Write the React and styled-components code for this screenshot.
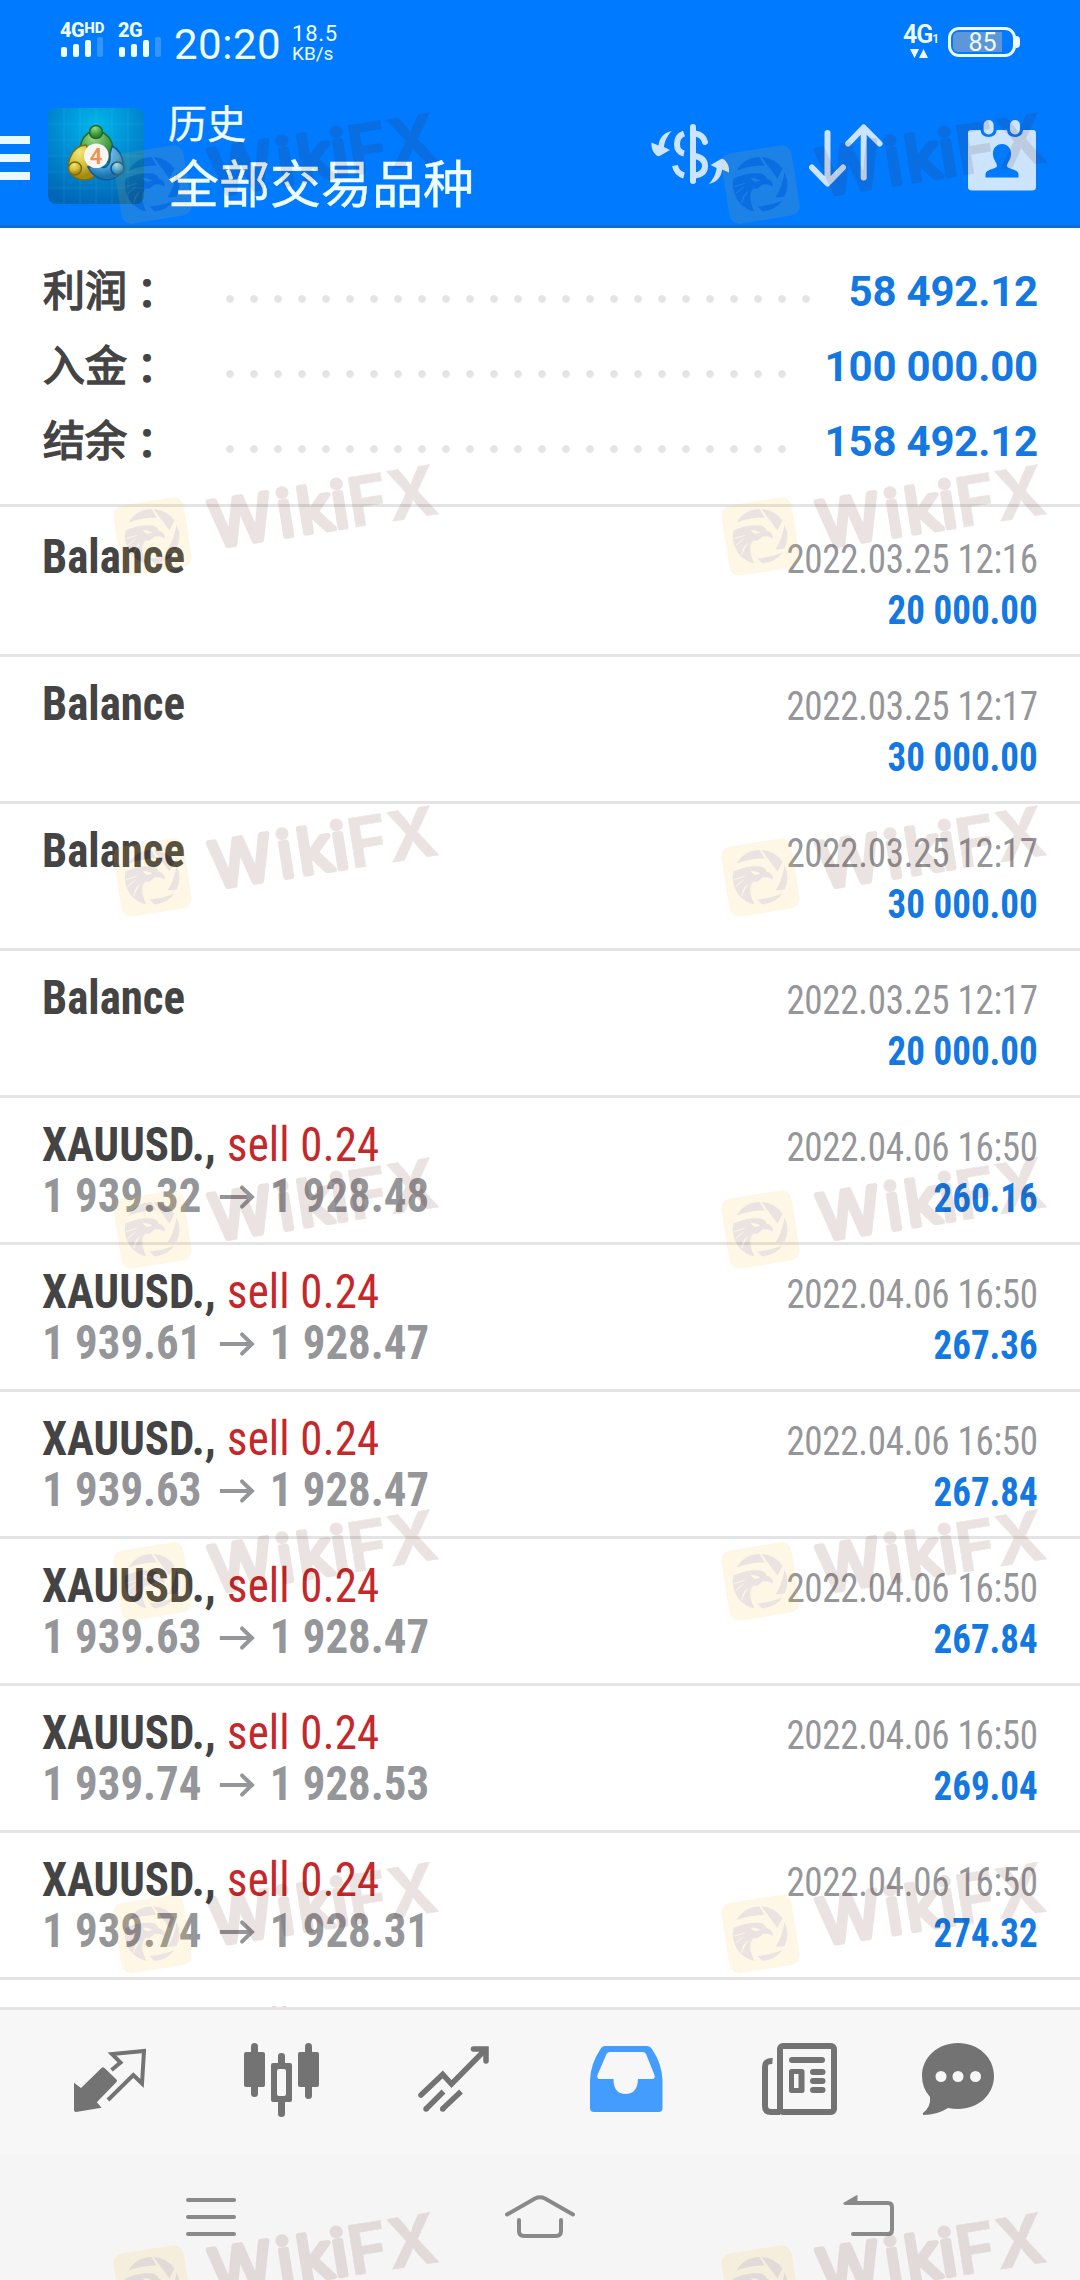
import React from 'react';
import styled, { createGlobalStyle, css } from 'styled-components';

const GlobalStyle = createGlobalStyle`
  * {
    box-sizing: border-box;
  }

  body {
    margin: 0;
    background: #fff;
  }
`;

// Layout
const Screen = styled.div`
  position: relative;
  display: flex;
  flex-direction: column;
  width: 1080px;
  height: 2280px;
  overflow: hidden;
  background: #fff;
  font-family: 'Roboto', 'Noto Sans CJK SC', sans-serif;
`;

// Status bar
const StatusBar = styled.div`
  display: flex;
  align-items: flex-start;
  height: 90px;
  padding: 0 60px;
  background: #007aff;
  color: #effdff;
`;

const Sim = styled.div`
  display: flex;
  flex-direction: column;
  width: ${props => props.$width}px;
  padding-top: 18px;
`;

const SimLabel = styled.div`
  height: 19px;
  font-size: 20px;
  line-height: 24px;
  font-weight: 800;
  letter-spacing: -0.5px;
  white-space: nowrap;

  sup {
    font-size: 15px;
    line-height: 1;
    vertical-align: 4px;
    letter-spacing: 0;
  }
`;

const Bars = styled.div`
  display: flex;
  align-items: flex-end;
  gap: 6px;
  height: 20px;
  padding-left: 1px;
`;

const Bar = styled.i`
  width: 6px;
  height: ${props => props.$height}px;
  border-radius: 2px;
  background: ${props => (props.$dim ? '#3395ff' : 'currentColor')};
`;

const Clock = styled.div`
  padding-top: 20px;
  font-size: 42px;
  line-height: 50px;
  letter-spacing: 0.5px;
`;

const Speed = styled.div`
  padding: 22px 0 0 11px;
  font-size: 22px;
  line-height: 23px;
  letter-spacing: 0.7px;

  small {
    display: block;
    font-size: 19px;
    line-height: 18px;
    letter-spacing: -0.1px;
  }
`;

const Network = styled.div`
  display: flex;
  flex-direction: column;
  margin-left: auto;
  width: 45px;
  padding-top: 24px;
  font-size: 25px;
  line-height: 22px;
  font-weight: 600;
  letter-spacing: -1px;

  sub {
    font-size: 12px;
    line-height: 1;
    vertical-align: 0;
  }

  svg {
    margin: 3px 0 0 7px;
  }
`;

const Battery = styled.div`
  display: flex;
  align-items: center;
  margin-top: 27px;

  &::after {
    content: '';
    width: 4px;
    height: 12px;
    border-radius: 0 4px 4px 0;
    background: #effdff;
  }
`;

const BatteryBody = styled.div`
  width: 68px;
  height: 30px;
  padding: 2px;
  border: 3px solid #effdff;
  border-radius: 11px;
  font-size: 25px;
  line-height: 21px;
  text-align: center;
`;

const BatteryLevel = styled.div`
  width: 49px;
  height: 20px;
  padding-left: 10px;
  border-radius: 5px 0 0 5px;
  background: #5c97d9;
`;

// App bar
const AppBar = styled.header`
  display: flex;
  align-items: flex-start;
  height: 138px;
  padding-right: 44px;
  border-bottom: 3px solid #0b6dcf;
  background: #007aff;
`;

const Burger = styled.div`
  display: flex;
  flex-direction: column;
  gap: 10px;
  width: 30px;
  margin: 46px 18px 0 0;

  i {
    height: 8px;
    background: #e9faff;
  }
`;

const AppLogo = styled.svg`
  width: 96px;
  height: 96px;
  margin-top: 18px;
`;

const Titles = styled.div`
  margin: 3px 0 0 24px;
  color: #effdff;
  font-family: 'Noto Sans CJK SC', sans-serif;
  -webkit-text-stroke: 0.4px #effdff;
`;

const Title = styled.div`
  font-size: 39px;
  line-height: 56px;
`;

const Subtitle = styled.div`
  font-size: 51px;
  line-height: 65px;
`;

const Actions = styled.div`
  display: flex;
  gap: 80px;
  margin: 30px 0 0 auto;
  color: #cce4ff;
`;

// Summary
const Summary = styled.section`
  height: 279px;
  padding: 24px 42px 0 43px;
  border-bottom: 3px solid #e4e4e4;
`;

const SummaryRow = styled.div`
  display: flex;
  align-items: center;
  height: 75px;
`;

const SummaryLabel = styled.div`
  width: 175px;
  color: #444;
  font: 400 42px/71px 'Noto Sans CJK SC', sans-serif;
  -webkit-text-stroke: 1.5px #444;
  padding-bottom: 4px;

  span {
    margin-left: -1px;
    font-family: 'Noto Sans CJK JP', sans-serif;
    line-height: 1;
    vertical-align: -3px;
  }
`;

const Leader = styled.div`
  flex: 1;
  height: 8px;
  margin: 18px 32px 0 8px;
  background: radial-gradient(circle at 4px 4px, #e4e4e4 3.4px, transparent 4.3px) 0 0 / 24px 8px repeat-x;
`;

const SummaryValue = styled.div`
  padding-top: 3px;
  color: #1478e2;
  font-size: 42px;
  font-weight: 700;
  letter-spacing: -0.2px;
`;

// Deals
const condensed = css`
  font-family: 'Roboto Condensed', 'Roboto', sans-serif;
  font-stretch: 75%;
  white-space: nowrap;
`;

const List = styled.main`
  height: 1500px;
  padding-top: 3px;
  overflow: hidden;
`;

const Row = styled.div`
  ${condensed}
  display: flex;
  justify-content: space-between;
  height: 147px;
  padding: 21px 42px 0 42px;
  border-bottom: 3px solid #e4e4e4;
  line-height: 51px;
`;

// both columns are squeezed a little past the narrowest face
const Deal = styled.div`
  font-size: 48px;
  font-weight: 700;
  color: #444;
  transform: scaleX(0.935);
  transform-origin: left;
`;

const Side = styled.span`
  margin-left: 1px;
  font-weight: 400;
  letter-spacing: 0.2px;
  color: #c5282a;
`;

const Prices = styled.div`
  display: flex;
  align-items: center;
  color: #95969a;

  svg {
    margin: 3px 16px 0 19px;
  }
`;

const Result = styled.div`
  padding-top: 3px;
  text-align: right;
  font-size: 40px;
  letter-spacing: -0.3px;
  color: #95969a;
  transform: scaleX(0.925);
  transform-origin: right;
`;

const Profit = styled.div`
  font-weight: 700;
  letter-spacing: 0;
  color: #1478e2;
`;

// Bottom bars
const TabBar = styled.nav`
  display: flex;
  align-items: flex-start;
  gap: 99px;
  height: 148px;
  padding: 33px 0 0 74px;
  border-top: 3px solid #e4e4e4;
  background: #f7f7f7;
  color: #737373;
`;

const Tab = styled.svg`
  flex: none;
  width: ${props => props.$width}px;
  height: 75px;
  margin-left: ${props => props.$shift || 0}px;
  color: ${props => (props.$active ? '#449cff' : 'inherit')};
`;

const SystemNav = styled.nav`
  display: flex;
  align-items: flex-start;
  justify-content: space-between;
  height: 125px;
  padding: 40px 186px 0;
  background: #f5f5f5;
  color: #898989;
`;

const WatermarkLayer = styled.svg`
  position: absolute;
  inset: 0;
  pointer-events: none;
`;

const summary = [
  { label: '利润', value: '58 492.12' },
  { label: '入金', value: '100 000.00' },
  { label: '结余', value: '158 492.12' },
];

const deals = [
  { name: 'Balance', time: '2022.03.25 12:16', profit: '20 000.00' },
  { name: 'Balance', time: '2022.03.25 12:17', profit: '30 000.00' },
  { name: 'Balance', time: '2022.03.25 12:17', profit: '30 000.00' },
  { name: 'Balance', time: '2022.03.25 12:17', profit: '20 000.00' },
  { name: 'XAUUSD.,', side: 'sell 0.24', open: '1 939.32', close: '1 928.48', time: '2022.04.06 16:50', profit: '260.16' },
  { name: 'XAUUSD.,', side: 'sell 0.24', open: '1 939.61', close: '1 928.47', time: '2022.04.06 16:50', profit: '267.36' },
  { name: 'XAUUSD.,', side: 'sell 0.24', open: '1 939.63', close: '1 928.47', time: '2022.04.06 16:50', profit: '267.84' },
  { name: 'XAUUSD.,', side: 'sell 0.24', open: '1 939.63', close: '1 928.47', time: '2022.04.06 16:50', profit: '267.84' },
  { name: 'XAUUSD.,', side: 'sell 0.24', open: '1 939.74', close: '1 928.53', time: '2022.04.06 16:50', profit: '269.04' },
  { name: 'XAUUSD.,', side: 'sell 0.24', open: '1 939.74', close: '1 928.31', time: '2022.04.06 16:50', profit: '274.32' },
  { name: 'XAUUSD.,', side: 'sell 0.24' },
];

const marks = [184.5, 536.5, 877.5, 1229.5, 1581.5, 1934, 2284.5];

const Signal = () => (
  <Bars>
    <Bar $height={10} />
    <Bar $height={13} />
    <Bar $height={17} />
    <Bar $height={20} $dim />
  </Bars>
);

const Logo = () => (
  <AppLogo viewBox="0 0 96 96">
    <defs>
      <radialGradient id="sky" cx="50%" cy="18%" r="85%">
        <stop offset="0" stopColor="#00b6ea" />
        <stop offset="0.5" stopColor="#018bd2" />
        <stop offset="1" stopColor="#0166b5" />
      </radialGradient>
      <radialGradient id="green" cx="40%" cy="20%" r="70%">
        <stop offset="0" stopColor="#a5d686" />
        <stop offset="0.6" stopColor="#4ba64a" />
        <stop offset="1" stopColor="#2a7f33" />
      </radialGradient>
      <radialGradient id="gold" cx="40%" cy="20%" r="70%">
        <stop offset="0" stopColor="#f0e67a" />
        <stop offset="0.6" stopColor="#d3bf38" />
        <stop offset="1" stopColor="#a68a10" />
      </radialGradient>
      <radialGradient id="blue" cx="40%" cy="20%" r="70%">
        <stop offset="0" stopColor="#a9dbf4" />
        <stop offset="0.6" stopColor="#4aa7dc" />
        <stop offset="1" stopColor="#1b74b2" />
      </radialGradient>
    </defs>
    <rect width="96" height="96" rx="8" fill="url(#sky)" />
    <path
      d="M16 0V96M32 0V96M48 0V96M64 0V96M80 0V96M0 16H96M0 32H96M0 48H96M0 64H96M0 80H96"
      stroke="#7fd8ff"
      strokeOpacity="0.12"
    />
    <g strokeWidth="1.5">
      <path d="M36 56C27 42 34 23 48 23S71 42 62 56L54 49C57 42 53 39 48 39S39 43 43 50Z" fill="url(#green)" stroke="#1f6b2a" />
      <path d="M38 37C22 38 16 60 24 67S42 73 48 67L44 57C38 57 38 50 42 45Z" fill="url(#gold)" stroke="#7d6d10" />
      <path d="M64 38C76 44 79 62 70 68C60 75 46 72 40 59L52 58C58 63 63 55 62 46Z" fill="url(#blue)" stroke="#15588c" />
      <circle cx="48" cy="24" r="6.5" fill="url(#green)" stroke="#1f6b2a" />
      <circle cx="27" cy="60.5" r="6.5" fill="url(#gold)" stroke="#7d6d10" />
      <circle cx="69.5" cy="60.5" r="6.5" fill="url(#blue)" stroke="#15588c" />
    </g>
    <circle cx="48.3" cy="47.7" r="12.3" fill="#f7f6f2" />
    <text x="48" y="55.5" textAnchor="middle" fontFamily="Roboto, sans-serif" fontSize="22" fontWeight="600" fill="#f0904a">
      4
    </text>
  </AppLogo>
);

const DollarIcon = () => (
  <svg width="78" height="71" viewBox="0 -4 78 71" fill="none" stroke="currentColor" strokeWidth="6">
    <path d="M42 3V57" strokeLinecap="round" />
    <path d="M44 9.500Q52.500 11 54 18" strokeLinecap="round" />
    <path d="M44 32Q54 34 54 42T44 51.500" />
    <path d="M33 9.500Q26 12 26 20T33 29.500M24 41.500Q25.500 49.500 33 51.500" />
    <g fill="currentColor" stroke="none">
      <path id="swoosh" d="M20.700 7C12 9 8.500 14 7.500 21.500L.500 18.500C0 24 2 28 5 31Q7 33 9.500 31.500L19 26 13 23C13.500 17 17 11 20.700 7Z" />
      <use href="#swoosh" transform="rotate(180 39.300 33.500)" />
    </g>
  </svg>
);

const SortIcon = () => (
  <svg width="79" height="71" viewBox="0 -4 79 71" fill="none" stroke="currentColor" strokeWidth="6" strokeLinecap="round" strokeLinejoin="round">
    <path d="M18.500 9V59M3 43.500L18.500 59.500 34 43.500" />
    <path d="M54.700 53.500V4M39.200 19.500L54.700 3.500 70.500 19.500" />
  </svg>
);

const CalendarIcon = () => (
  <svg width="68" height="71" viewBox="0 0 68 71" fill="currentColor">
    <path
      fillRule="evenodd"
      d="M3 10H12.500Q13 17 20.600 17T28.700 10H39Q39.500 17 47 17T55 10H65Q68 10 68 13V67Q68 70.500 64 70.500H4Q0 70.500 0 67V13Q0 10 3 10ZM34 24C28 24 24.500 29 25 35 25.500 40 29 43 29 46 29 49 18 49 17.500 54V57.500H50.500V54C50 49 39 49 39 46 39 43 42.500 40 43 35 43.500 29 40 24 34 24Z"
    />
    <rect x="15.600" y="0" width="10" height="14.500" rx="5" />
    <rect x="42" y="0" width="10" height="14.500" rx="5" />
  </svg>
);

const Arrow = () => (
  <svg width="38" height="24" viewBox="0 0 38 24" fill="none" stroke="currentColor" strokeWidth="4.200">
    <path d="M0 12H34" />
    <path d="M24 2.500L34.500 12 24 21.500" strokeLinecap="round" />
  </svg>
);

const Watermark = ({ x, y }) => (
  <g transform={`translate(${x} ${y})`} opacity="0.115">
    <g transform="rotate(-9)">
      <rect x="-35.500" y="-35.500" width="71" height="71" rx="10" fill="#f8c030" />
      <g fill="#501405" stroke="#501405" strokeLinejoin="round" fontFamily="Inter, sans-serif">
        <text x="59 127 147 182" y="20.500" fontSize="63" strokeWidth="5.500">Wiki</text>
        <text x="198" y="22.500" fontSize="69" fontWeight="700" strokeWidth="0.500" textLength="90" lengthAdjust="spacingAndGlyphs">FX</text>
      </g>
    </g>
    <g fill="#501405">
      <path d="M-24-14A27.500 27.500 0 0 1-1-27.500L4-19Q-10-19-24-14Z" />
      <path d="M1-27.500A27.500 27.500 0 0 1 22-16L17-6Z" />
      <path d="M24-12A27.500 27.500 0 0 1 24 12L15 13Q22 2 24-12Z" />
      <path d="M22 16A27.500 27.500 0 0 1 2 27L-3 22Q10 21 22 16Z" />
      <path d="M-27-6Q-14-12 0-11 5-10 6-6 13-4 12 2 8-1 2 0-2 5-7 4-14 11-6 27A27.500 27.500 0 0 1-27-6Z" />
    </g>
    <path d="M-9-6Q-4-6-1-4L-6-3ZM-26 2L-16-1M-25 9L-17 3M-19 19Q-18 11-13 7" fill="#f8c030" stroke="#f8c030" />
  </g>
);

const App = () => {
  return (
    <Screen>
      <GlobalStyle />
      <StatusBar>
        <Sim $width={58}>
          <SimLabel>4G<sup>HD</sup></SimLabel>
          <Signal />
        </Sim>
        <Sim $width={56}>
          <SimLabel>2G</SimLabel>
          <Signal />
        </Sim>
        <Clock>20:20</Clock>
        <Speed>
          18.5
          <small>KB/s</small>
        </Speed>
        <Network>
          <span>4G<sub>1</sub></span>
          <svg width="18" height="9" viewBox="0 0 18 9" fill="currentColor">
            <path d="M0 0H9L4.500 9ZM9 9H18L13.500 0Z" />
          </svg>
        </Network>
        <Battery>
          <BatteryBody>
            <BatteryLevel>85</BatteryLevel>
          </BatteryBody>
        </Battery>
      </StatusBar>

      <AppBar>
        <Burger>
          <i />
          <i />
          <i />
        </Burger>
        <Logo />
        <Titles>
          <Title>历史</Title>
          <Subtitle>全部交易品种</Subtitle>
        </Titles>
        <Actions>
          <DollarIcon />
          <SortIcon />
          <CalendarIcon />
        </Actions>
      </AppBar>

      <Summary>
        {summary.map(item => (
          <SummaryRow key={item.label}>
            <SummaryLabel>{item.label}<span>：</span></SummaryLabel>
            <Leader />
            <SummaryValue>{item.value}</SummaryValue>
          </SummaryRow>
        ))}
      </Summary>

      <List>
        {deals.map((deal, i) => (
          <Row key={i}>
            <Deal>
              {deal.name} {deal.side && <Side>{deal.side}</Side>}
              {deal.open && (
                <Prices>
                  {deal.open}
                  <Arrow />
                  {deal.close}
                </Prices>
              )}
            </Deal>
            {deal.time && (
              <Result>
                {deal.time}
                <Profit>{deal.profit}</Profit>
              </Result>
            )}
          </Row>
        ))}
      </List>

      <TabBar>
        <Tab $width={72} viewBox="0 -6 72 75" fill="currentColor">
          <path d="M0 33.700L7 39 27.500 19Q29 17.500 30.500 19L42.500 30.500Q43.500 31.700 42.500 33L22.800 53.300 27.600 58.700 2 63Q0 63 0 61Z" />
          <path d="M37.500 21L46.500 13.500 38 5 70 2 68 34.500 59.300 26 34 51" fill="none" stroke="currentColor" strokeWidth="4" />
        </Tab>
        <Tab $width={75} $shift={-1} viewBox="0 0 75 75" fill="currentColor">
          <rect y="9" width="21" height="35" rx="2" />
          <rect x="7" width="7" height="54" rx="3.500" />
          <path fillRule="evenodd" d="M29 20H46Q48 20 48 22V57Q48 59 46 59H29Q27 59 27 57V22Q27 20 29 20ZM35 26Q33 26 33 28V51Q33 53 35 53H40Q42 53 42 51V28Q42 26 40 26Z" />
          <path d="M34 21V13Q34 10 37.500 10T41 13V21ZM34 58V71Q34 74 37.500 74T41 71V58Z" />
          <rect x="54" y="9" width="21" height="35" rx="2" />
          <rect x="61" width="7" height="56" rx="3.500" />
        </Tab>
        <Tab $width={71} viewBox="0 -3 71 75" fill="none" stroke="currentColor" strokeWidth="5.500">
          <path d="M3 49L24.700 28.500 33.500 38 67 4" strokeLinecap="round" />
          <path d="M55.500 3H68V15" strokeLinecap="round" />
          <path d="M8 63L25.500 45.500M24.500 63L43 45.500" />
          <path d="M8 63h.1M24.700 63h.1" strokeLinecap="round" />
        </Tab>
        <Tab $width={73} $active $shift={2} viewBox="0 -3 73 75" fill="currentColor">
          <path
            fillRule="evenodd"
            d="M15 0H57Q60 0 62 3 72 18 72.500 34V62Q72.500 66 68.500 66H4Q0 66 0 62V34Q.500 18 10.500 3 12 0 15 0ZM20 6Q17.500 6 16.500 8L7.500 29Q6.500 32.700 9.500 33H23.500Q23.500 48 35.500 48T48 33H62.500Q65.500 32.700 64.500 29L56 8Q55 6 52.500 6Z"
          />
        </Tab>
        <Tab $width={75} viewBox="0 0 75 75" fill="currentColor">
          <g fill="none" stroke="currentColor" strokeWidth="6">
            <rect x="18" y="3" width="54" height="66" rx="3" />
            <path d="M10.500 18Q3 17.500 3 24V63Q3 69 9 69H18" />
          </g>
          <rect x="27" y="14" width="36" height="6" rx="3" />
          <path fillRule="evenodd" d="M29.500 26H40Q42.500 26 42.500 28.500V47.500Q42.500 50 40 50H29.500Q27 50 27 47.500V28.500Q27 26 29.500 26ZM32 31V45H36.500V31Z" />
          <rect x="48" y="26" width="15.500" height="6" rx="3" />
          <rect x="48" y="35" width="15.500" height="6" rx="3" />
          <rect x="48" y="44" width="15.500" height="6" rx="3" />
        </Tab>
        <Tab $width={72} $shift={-14} viewBox="0 0 72 75" fill="currentColor">
          <path
            fillRule="evenodd"
            d="M36 0C56 0 72 14 72 33S56 66 36 66Q31 66 26 65 15 72 1.500 72 0 71 1 70 9 64 8 54 0 45 0 33C0 14 16 0 36 0ZM19 28A5.500 5.500 0 1 0 19 39 5.500 5.500 0 1 0 19 28ZM36 28A5.500 5.500 0 1 0 36 39 5.500 5.500 0 1 0 36 28ZM53.500 28A5.500 5.500 0 1 0 53.500 39 5.500 5.500 0 1 0 53.500 28Z"
          />
        </Tab>
      </TabBar>

      <SystemNav>
        <svg width="50" height="44" viewBox="0 0 50 44" stroke="currentColor" strokeWidth="4" strokeLinecap="round">
          <path d="M2 5H48M2 22H48M2 39H48" />
        </svg>
        <svg width="70" height="44" viewBox="0 0 70 44" fill="none" stroke="currentColor" strokeWidth="4" strokeLinecap="round">
          <path d="M2 19.500L30 3.500Q35 1 40 3.500L68 19.500M14 25V36Q14 41 19 41H51Q56 41 56 36V25" />
        </svg>
        <svg width="51" height="44" viewBox="0 0 51 44" fill="none" stroke="currentColor" strokeWidth="4" strokeLinecap="round">
          <path d="M10 39H45Q49 39 49 35V12Q49 8 45 8H12" />
          <path d="M14.500 0V10H2Q-1 9 1 7.500L13 .500Z" fill="currentColor" stroke="none" />
        </svg>
      </SystemNav>

      <WatermarkLayer width="1080" height="2280" viewBox="0 0 1080 2280">
        {marks.map(y => (
          <React.Fragment key={y}>
            <Watermark x={152.5} y={y} />
            <Watermark x={760.5} y={y} />
          </React.Fragment>
        ))}
      </WatermarkLayer>
    </Screen>
  );
};

export default App;
